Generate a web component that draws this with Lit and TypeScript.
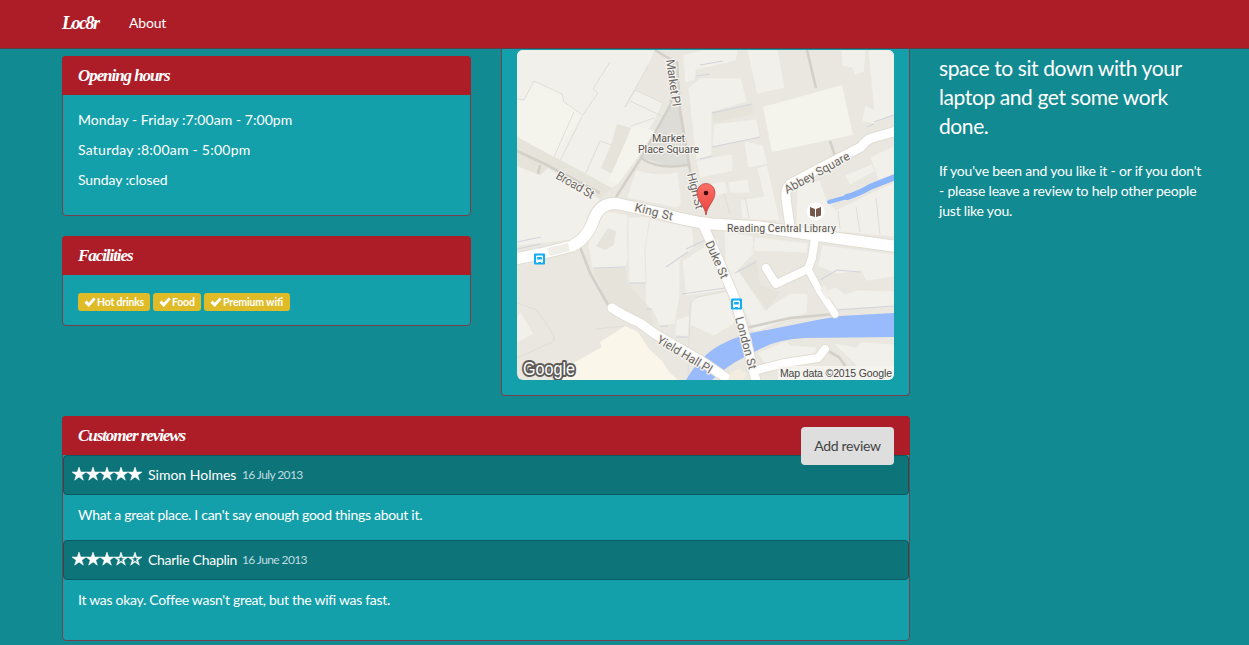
import { LitElement, html, svg, css } from "lit";
import { customElement, property } from "lit/decorators.js";

const STAR = "M7 0 8.7 5H14L9.8 8.2 11.4 13.2 7 10.1 2.6 13.2 4.2 8.2 0 5H5.3Z";
const STAR_HOLE = "M7 3.3 6.1 6.1H3.2L5.6 7.8 4.7 10.7 7 9 9.3 10.7 8.4 7.8 10.8 6.1H7.9Z";

@customElement("location-map")
export class LocationMap extends LitElement {
  static styles = css`
    :host { display: block; height: 330px; }
    svg { display: block; width: 377px; height: 330px; border-radius: 6px; }
    text { font-family: Roboto, sans-serif; font-size: 12px; fill: #6a6663; stroke: #f6f5f1; stroke-width: 2.4px; stroke-linejoin: round; paint-order: stroke; }
    .place { font-size: 10.5px; fill: #55504d; }
    .square { font-size: 10px; }
    .credit { font-family: "Liberation Sans", sans-serif; font-size: 10.5px; fill: #444; stroke: none; }
    .logo { font-family: "Liberation Sans", sans-serif; font-size: 18px; font-weight: 400; fill: #fff; stroke: #5d5a57; stroke-width: 4px; }
    .logo-face { font-family: "Liberation Sans", sans-serif; }
    .block { fill: #f2f0ea; stroke: #e9e7df; stroke-width: 0.7px; }
    .pale { fill: #f4f3ec; }
    .court { fill: #e5e3da; }
    .edge { fill: none; stroke: #dfddd9; stroke-width: 1px; }
    .wall { fill: none; stroke: #d3d3dd; stroke-width: 1.2px; }
    .path { fill: none; stroke: #d2d0c9; stroke-width: 2.6px; }
    .casing { fill: none; stroke: #e0ddd4; stroke-linecap: round; stroke-linejoin: round; }
    .road { fill: none; stroke: #fff; stroke-linecap: round; stroke-linejoin: round; }
    .water { fill: #99bbfb; }
    .brook { fill: none; stroke: #8db5fb; stroke-linecap: round; }
  `;

  private roads: [string, number][] = [
    ["M510 260 540 254 572 246Q588 238 594 219 601 201 619 204L660 213Q685 221 712 224L760 227 835 238 900 247", 11],
    ["M703 225 713 247 734 296 744 332 757 385", 9],
    ["M612 308Q622 315 640 323L655 334 700 360 735 384", 9],
    ["M900 130 872 138Q866 140 861 147L820 168 792 183Q785 186 786 199L790 226", 9],
    ["M815 238 812 258 808 269 776 284 766 268", 8],
    ["M808 269 819 290 835 314", 7],
    ["M757 370 785 363 818 358 825 349", 8],
  ];

  private bus(x: number, y: number) {
    return svg`<g transform="translate(${x} ${y})">
      <rect x="-5.5" y="-5.5" width="11" height="11" rx="1" fill="#12aef4"></rect>
      <path d="M-3.500 3V-2.500Q-3.500-3.500-2.500-3.500H2.500Q3.500-3.500 3.500-2.500V3H3V4H1.500V3H-1.500V4H-3V3Z" fill="#fff"></path>
      <path d="M-2.300-2H2.300V.4H-2.300Z" fill="#12aef4"></path>
    </g>`;
  }

  render() {
    return html`<svg viewBox="517 50 377 330" role="img" aria-label="Map of Reading">
      <defs><linearGradient id="pin" x2="0" y2="1"><stop stop-color="#fb7068"></stop><stop offset="1" stop-color="#e8423c"></stop></linearGradient></defs>
      <rect x="517" y="50" width="377" height="330" fill="#e9e7df"></rect>
      <path class="block" d="M517 50H655L648 66 625 107 635 90 663 102 655 120 617 185 609 190 595 179 517 137Z"></path>
      <path class="pale" d="M534 81 562 94 564 102 583 113 553 159 517 136V99L524 100Z"></path>
      <path class="edge" d="M517 99 524 100 534 81 562 94 564 102 583 115 598 93 593 89 610 62M553 159 574 112M560 161 582 117M585 175 600 141 617 147M648 66 625 107 635 90 663 103M630 101 662 116M654 118 631 126"></path>
      <path class="court" d="M617 124 631 128 612 174 601 168 611 145Z"></path>
      <path class="pale" d="M633 126 657 131 618 184 608 181Z"></path>
      <path class="court" d="M517 137 612 188 598 202 517 166Z"></path>
      <path class="block" d="M517 166 540 175 548 168 600 199 590 211 580 239 517 246Z"></path>
      <path class="path" d="M517 151 545 164 600 193M540 165 538 174"></path>
      <path class="block" d="M636 170Q660 177 678 172L681 200Q682 209 672 207L627 198Z"></path>
      <path d="M671 106 679 108 688 165 672 167 643 158Z" fill="#dedcd6"></path>
      <path class="path" d="M655 50 673 61 671 104 641 158 616 197M677 61 680 110 690 170 696 205M641 158Q658 170 688 165"></path>
      <path class="block" d="M683 55 702 50H738L736 61 696 70 695 80 685 83ZM688 88 700 78 741 78 747 102 712 112 712 157 696 161ZM714 124 757 119 760 138 712 147ZM696 160 732 154 733 171 700 178ZM709 184 725 181 728 193 711 197ZM728 182 748 179 750 193 730 193ZM744 141 763 145 768 164 748 168ZM757 168 767 165 773 190 780 221 742 219 740 200 764 196Z"></path>
      <path class="block" d="M747 50H778L785 88 757 94ZM841 50H866L864 72 855 75 852 68 842 66ZM868 50H894V116L874 124 862 121 865 105 874 110ZM845 175 872 164 875 171 850 185ZM870 157 894 146V174L878 180ZM797 187 820 180 827 201 836 210 894 182V237L840 232 796 227Z"></path>
      <path class="pale" d="M763 107 842 85 853 135 772 152Z"></path>
      <path class="court" d="M712 113 752 104 753 114 714 123Z"></path>
      <path class="wall" d="M700 65 723 61M712 113 752 104M712 147 760 137M700 159 712 156M867 127 874 124M874 122 894 115M696 76 710 74"></path>
      <path class="edge" d="M711 197 709 211M724 193 730 214M745 197 749 218M838 211 840 229M856 207 860 232M876 198 880 234"></path>
      <path class="path" d="M807 50 816 88M830 141 835 156"></path>
      <path class="block" d="M593 226 607 211 628 215 627 235 628 260 625 268 592 268 588 245ZM628 217 650 217 645 249 646 283 629 283ZM650 219 692 227 694 247 680 260 680 294 675 324 660 326 652 309 646 308 645 249ZM682 261 718 238 727 290 686 296ZM676 320 690 315 688 337 675 335ZM692 298 727 291 735 323 714 336 690 325Z"></path>
      <path class="court" d="M608 228 616 231 614 245 605 250 596 246ZM593 269 626 268 627 283 650 308 654 327 628 319 606 303Z"></path>
      <path class="wall" d="M594 268 625 267M629 283 646 283M646 309 652 309M660 326 668 326M666 267 688 252M686 249 710 238M517 242 541 237M517 249 541 244M682 294 725 288M676 337 688 337"></path>
      <path class="block" d="M517 317 520 311 534 334 517 343Z"></path>
      <path class="edge" d="M517 303 537 310 553 334Q557 341 548 344L517 358M727 291 698 297Q691 299 690 308L688 375M596 329 625 326"></path>
      <path class="block" d="M724 231 753 236 754 253 738 270 765 310 790 293 808 294 807 313 754 332 726 272ZM755 237 808 243 807 253 752 251ZM822 245 894 254V277L866 281 861 271 837 274 818 266ZM820 293 836 287 845 294 858 290 894 291V307L836 309Z"></path>
      <path class="court" d="M738 270 756 259 760 285 780 292 767 310Z"></path>
      <path class="wall" d="M735 273 756 262M820 280 837 270 860 272M837 310 894 306"></path>
      <path class="path" d="M580 247 590 273 608 305M746 328 790 318 835 314"></path>
      <path d="M560 372 575 362 602 347 600 342 625 326 638 332 649 349 662 361 670 373 678 380H555Z" fill="#faf6e9"></path>
      <path class="block" d="M757 353 786 341 790 345 817 347 815 354 765 364ZM833 343 856 347 861 342 894 344V367H858Z"></path>
      <path class="water" d="M894 313 840 316 817 320 767 330Q742 333 720 345 700 356 686 380H712Q728 365 743 358L760 349Q778 339 805 338L894 337Z"></path>
      <path class="brook" stroke-width="4" d="M829 202 847 197"></path>
      <path class="brook" stroke-width="6" d="M847 197Q858 194 870 187L898 176"></path>
      <path class="path" d="M826 350 839 357 846 367"></path>
      ${this.roads.map(([d, w]) => svg`<path class="casing" d=${d} stroke-width=${w + 2}></path>`)}
      ${this.roads.map(([d, w]) => svg`<path class="road" d=${d} stroke-width=${w}></path>`)}
      <path d="M547 248 568 243 570 251 550 256Z" fill="#efeee9"></path>
      <path d="M820 290 827 300 832 296 824 285Z" fill="#f0eee7"></path>
      <path d="M730 373 739 369 747 374 743 380H728Z" fill="#f3ede0"></path>
      ${this.bus(539.5, 259)}${this.bus(736.5, 304)}
      <text transform="translate(666 60) rotate(82)" textLength="47">Market Pl</text>
      <text transform="translate(555 178) rotate(30)" textLength="42">Broad St</text>
      <text transform="translate(687 174) rotate(76)" textLength="37">High St</text>
      <text transform="translate(634 211) rotate(14)" textLength="39">King St</text>
      <text transform="translate(787 194) rotate(-29)" textLength="73">Abbey Square</text>
      <text transform="translate(705 243) rotate(66)" textLength="40">Duke St</text>
      <text transform="translate(735 318) rotate(75)" textLength="54">London St</text>
      <text transform="translate(656 342) rotate(31)" textLength="62">Yield Hall Pl</text>
      <text class="place square" x="652" y="141.500" textLength="33" lengthAdjust="spacingAndGlyphs">Market</text>
      <text class="place square" x="638" y="152.500" textLength="61" lengthAdjust="spacingAndGlyphs">Place Square</text>
      <text class="place" x="727" y="232" textLength="109">Reading Central Library</text>
      <circle cx="815.5" cy="211.5" r="9" fill="#fff"></circle>
      <path d="M810 207 815 209V217L810 215.500ZM821 207 816 209V217L821 215.500Z" fill="#76584d"></path>
      <path d="M706 215C705 206 697 201 697 192.500A9 9 0 0 1 715 192.500C715 201 707 206 706 215Z" fill="url(#pin)" stroke="#b6443f" stroke-width=".8"></path>
      <circle cx="706" cy="193" r="2.300" fill="#3d0c0b"></circle>
      <path d="M778 366H894V380H778Z" fill="#f8f7f3" opacity=".75"></path>
      <text class="credit" x="780" y="377" textLength="112">Map data ©2015 Google</text>
      <text class="logo" x="523" y="375" textLength="52" lengthAdjust="spacingAndGlyphs">Google</text>
    </svg>`;
  }
}

@customElement("star-rating")
export class StarRating extends LitElement {
  static styles = css`
    :host { display: inline-flex; }
    svg { width: 14px; height: 14px; overflow: visible; fill: #fff; fill-rule: evenodd; stroke: #fff; stroke-width: 0.5px; }
  `;
  @property({ type: Number }) value = 0;
  render() {
    return [1, 2, 3, 4, 5].map(
      (n) => html`<svg viewBox="0 0 14 14"><path d=${n <= this.value ? STAR : STAR + STAR_HOLE}></path></svg>`
    );
  }
}

@customElement("app-root")
export class AppRoot extends LitElement {
  static styles = css`
    :host { display: block; height: 645px; overflow: hidden; background: #118a91; color: #fff; font: 14px/20px Lato, sans-serif; }
    * { box-sizing: border-box; }
    p, h2 { margin: 0; }
    .nav { position: relative; z-index: 1; display: flex; align-items: center; gap: 30px; height: 49px; padding: 0 62px 2px; background: #ad1d28; border-bottom: 1px solid #5c3f4a; }
    .script { font-family: "Liberation Serif", serif; font-style: italic; font-weight: 700; white-space: nowrap; }
    .brand { width: 37px; font-size: 18px; letter-spacing: -1.5px; }
    .about { letter-spacing: -0.2px; }
    .page { display: grid; grid-template-columns: 848px 263px; column-gap: 29px; padding-left: 62px; }
    .top { display: grid; grid-template-columns: 409px 409px; column-gap: 30px; }
    .side { display: flex; flex-direction: column; gap: 20px; padding-top: 7px; }
    .panel { background: #14a0aa; border: 1px solid #75404d; border-radius: 4px; }
    .head { height: 39px; margin: -1px -1px 0; padding: 10px 16px; background: #ad1d28; border-radius: 4px 4px 0 0; font-size: 17px; line-height: 20px; letter-spacing: -1.07px; }
    .hours { display: flex; flex-direction: column; gap: 10px; height: 121px; padding: 15px; margin-bottom: -1px; }
    .weekdays { letter-spacing: 0.05px; }
    .saturday { letter-spacing: 0.24px; }
    .sunday { letter-spacing: -0.1px; }
    .tags { display: flex; gap: 3px; height: 50px; padding: 18px 15px 0; }
    .tag { display: flex; align-items: center; height: 18px; padding: 0 6px 1px; border-radius: 3px; background: #debb27; font-size: 10.5px; font-weight: 700; white-space: nowrap; }
    .tag svg { flex: none; width: 12px; height: 12px; margin-right: 1px; fill: #fff; }
    .tag.drinks { width: 72px; letter-spacing: -0.2px; }
    .tag.food { width: 48px; letter-spacing: -0.2px; }
    .tag.wifi { width: 86px; letter-spacing: -0.15px; }
    .map { height: 347px; padding: 1px 15px 15px; border-top: 0; border-radius: 0 0 4px 4px; }
    .reviews { position: relative; height: 225px; margin-top: 20px; }
    .add { position: absolute; top: 10px; right: 15px; width: 93px; height: 38px; padding: 0; border: 0; border-radius: 4px; background: #dedede; color: #444; font: 14px/38px Lato, sans-serif; letter-spacing: -0.3px; text-align: center; }
    .who { display: flex; align-items: center; height: 40px; padding: 0 8px; background: #0d747a; border: 1px solid #0c5961; border-radius: 4px; }
    .who star-rating { margin-right: 6px; padding-bottom: 2px; }
    .name { width: 94px; white-space: nowrap; }
    .name.tight { letter-spacing: -0.28px; }
    .date { font-size: 12px; letter-spacing: -0.6px; color: #bfdde0; }
    .text { height: 45px; padding: 10px 15px; letter-spacing: -0.29px; }
    .about-place { padding-top: 4px; white-space: nowrap; }
    .lead { font-size: 21px; line-height: 29px; letter-spacing: -0.4px; }
    .note { margin-top: 21px; letter-spacing: -0.2px; }
  `;

  private hours = [
    ["Monday - Friday :7:00am - 7:00pm", "weekdays"],
    ["Saturday :8:00am - 5:00pm", "saturday"],
    ["Sunday :closed", "sunday"],
  ];
  private facilities = [["Hot drinks", "drinks"], ["Food", "food"], ["Premium wifi", "wifi"]];
  private reviews = [
    { stars: 5, name: "Simon Holmes", fit: "", date: "16 July 2013", text: "What a great place. I can't say enough good things about it." },
    { stars: 3, name: "Charlie Chaplin", fit: "tight", date: "16 June 2013", text: "It was okay. Coffee wasn't great, but the wifi was fast." },
  ];

  render() {
    return html`
      <nav class="nav"><span class="brand script">Loc8r</span><span class="about">About</span></nav>
      <main class="page">
        <div>
          <div class="top">
            <div class="side">
              <section class="panel">
                <h2 class="head script">Opening hours</h2>
                <div class="hours">${this.hours.map(([label, kind]) => html`<p class=${kind}>${label}</p>`)}</div>
              </section>
              <section class="panel">
                <h2 class="head script">Facilities</h2>
                <div class="tags">
                  ${this.facilities.map(([label, kind]) => html`<span class="tag ${kind}"><svg viewBox="0 0 12 12"><path d="M.4 6.800 2.600 4.600 4.700 6.700 9.600 1.400 11.700 3.300 4.800 10.900Z"></path></svg>${label}</span>`)}
                </div>
              </section>
            </div>
            <section class="panel map"><location-map></location-map></section>
          </div>
          <section class="panel reviews">
            <h2 class="head script">Customer reviews</h2>
            ${this.reviews.map((r) => html`
              <div class="who"><star-rating .value=${r.stars}></star-rating><span class="name ${r.fit}">${r.name}</span><span class="date">${r.date}</span></div>
              <p class="text">${r.text}</p>`)}
            <button class="add">Add review</button>
          </section>
        </div>
        <aside class="about-place">
          <p class="lead">space to sit down with your<br />laptop and get some work<br />done.</p>
          <p class="note">If you've been and you like it - or if you don't<br />- please leave a review to help other people<br />just like you.</p>
        </aside>
      </main>`;
  }
}
